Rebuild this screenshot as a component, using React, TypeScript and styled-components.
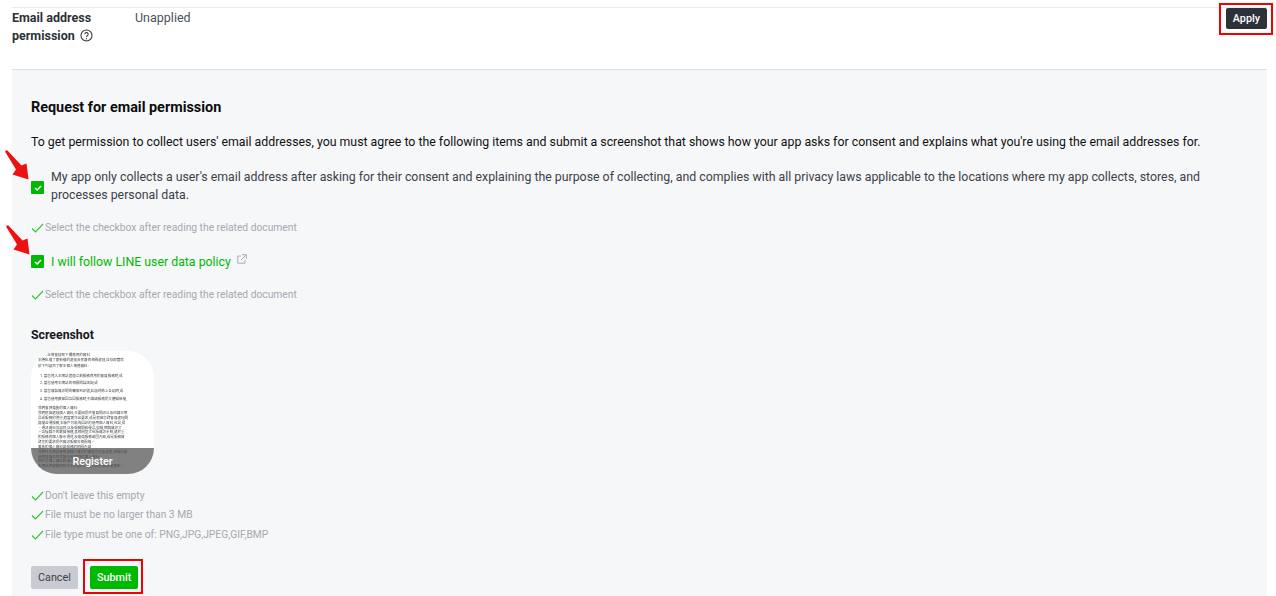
import React from "react";
import styled, { createGlobalStyle } from "styled-components";

const Global = createGlobalStyle`
  html, body { margin: 0; padding: 0; background: #fff; height: 596px; overflow: hidden; }
  body { font-family: Roboto, "Noto Sans CJK TC", sans-serif; color: #1e1e1e; }
`;

const Page = styled.div`
  width: 1276px;
  height: 596px;
  padding: 7px 9px 0 12px;
  box-sizing: border-box;
  overflow: hidden;
  position: relative;
`;

const PermissionRow = styled.section`
  height: 61px;
  border-top: 1px solid #e8eaec;
  border-bottom: 1px solid #dcdfe2;
  display: grid;
  grid-template-columns: 123px 1fr auto;
  align-items: start;
  box-sizing: content-box;
`;

const RowLabel = styled.div`
  font-size: 12.5px;
  font-weight: 700;
  line-height: 18px;
  padding-top: 1px;
  color: #2c3138;
`;

const HelpIcon = styled.svg`
  width: 13px;
  height: 13px;
  margin-left: 5px;
  vertical-align: -2px;
`;

const Status = styled.div`
  font-size: 12.5px;
  line-height: 18px;
  padding-top: 1px;
  color: #4c5158;
`;

const Annotated = styled.span<{ $inset: string }>`
  position: relative;
  display: inline-flex;
  &::after {
    content: "";
    position: absolute;
    inset: ${(p) => p.$inset};
    border: 2.5px solid #f00000;
    pointer-events: none;
  }
`;

const Button = styled.button<{ $variant: "dark" | "green" | "grey" }>`
  height: ${(p) => (p.$variant === "dark" ? 21 : 23)}px;
  padding: 0 7px;
  border: 0;
  border-radius: 2px;
  font: ${(p) => (p.$variant === "grey" ? 400 : 500)} 10.8px/21px Roboto, sans-serif;
  color: ${(p) => (p.$variant === "grey" ? "#3c4148" : "#fff")};
  background: ${(p) =>
    p.$variant === "dark" ? "#2d323a" : p.$variant === "green" ? "#00b900" : "#c8ccd2"};
`;

const ApplyCell = styled.div`
  display: flex;
`;

const Panel = styled.section`
  background: #f6f7f9;
  height: 530px;
  padding: 29px 19px 0;
  box-sizing: border-box;
`;

const Heading = styled.h2`
  margin: 0;
  font-size: 14.4px;
  font-weight: 700;
  line-height: 18px;
  color: #0c0c0c;
`;

const Intro = styled.p`
  margin: 16px 0 0;
  font-size: 12.33px;
  line-height: 18px;
  color: #111;
`;

const CheckRow = styled.label<{ $spaced?: boolean }>`
  display: flex;
  align-items: center;
  gap: 7px;
  margin-top: ${(p) => (p.$spaced ? 18 : 17)}px;
`;

const Box = styled.span<{ $drop?: boolean }>`
  position: relative;
  flex: none;
  width: 13px;
  height: 13px;
  margin-top: ${(p) => (p.$drop ? 3 : -1)}px;
  border-radius: 1px;
  background: #00b900;
  display: flex;
  align-items: center;
  justify-content: center;
`;

const CheckText = styled.span`
  font-size: 12.33px;
  line-height: 18px;
  color: #3c4148;
`;

const PolicyLink = styled.a`
  font-size: 12.33px;
  line-height: 18px;
  color: #00b900;
  display: inline-flex;
  align-items: flex-start;
  gap: 6px;
`;

const ExternalIcon = styled.svg`
  width: 10px;
  height: 10px;
  margin-top: 1px;
`;

const Hint = styled.div<{ $tight?: boolean; $afterThumb?: boolean }>`
  display: flex;
  align-items: center;
  gap: 1px;
  font-size: 10.28px;
  line-height: 14px;
  color: #a4a9b0;
  margin-top: ${(p) => (p.$tight ? 5.4 : p.$afterThumb ? 15 : 17)}px;
`;

const ArrowMark = styled.svg<{ $nudge?: boolean }>`
  position: absolute;
  left: ${(p) => (p.$nudge ? -25 : -26)}px;
  top: ${(p) => (p.$nudge ? -30 : -31)}px;
  width: 24px;
  height: 30px;
`;

const SubHeading = styled.h3`
  margin: 24px 0 0;
  font-size: 12.3px;
  font-weight: 700;
  line-height: 18px;
  color: #16181b;
`;

const Thumb = styled.div`
  position: relative;
  width: 123px;
  height: 123px;
  margin-top: 7px;
  border-radius: 26px;
  overflow: hidden;
  background: #fff;
  box-sizing: border-box;
  padding: 2px 8px 0 7px;
`;

const ThumbLine = styled.div<{ $kind?: "lead" | "item" | "body" }>`
  font-size: 3.55px;
  line-height: ${(p) => (p.$kind === "item" ? 7.6 : p.$kind === "body" ? 4.85 : 5.25)}px;
  white-space: nowrap;
  color: #45484c;
  padding-left: ${(p) => (p.$kind === "lead" ? 7 : p.$kind === "item" ? 2 : 0)}px;
  filter: blur(0.25px);
`;

const ThumbList = styled.div`
  margin: 4px 0 3px;
`;

const RegisterOverlay = styled.div`
  position: absolute;
  left: 0;
  right: 0;
  bottom: 0;
  height: 26px;
  background: rgba(80, 80, 80, 0.72);
  color: #fff;
  font-size: 10.8px;
  font-weight: 500;
  line-height: 27px;
  text-align: center;
`;

const Actions = styled.div`
  display: flex;
  gap: 12px;
  margin-top: 24px;
`;

const Check = () => (
  <svg width="13" height="10" viewBox="0 0 13 10" fill="none">
    <path d="M1 5.5 L4.5 9 L12 1" stroke="#2fc42f" strokeWidth="1.1" />
  </svg>
);

const Arrow = ({ nudge }: { nudge?: boolean }) => (
  <ArrowMark $nudge={nudge} viewBox="0 0 24 30">
    <path d="M0 1.5 L2 0 L16.5 15.5 L21.5 13.5 L23.5 29.5 L7.5 24.5 L11 19.5 Z" fill="#ee1111" />
  </ArrowMark>
);

const Tick = () => (
  <svg width="8" height="6" viewBox="0 0 8 6" fill="none">
    <path d="M1 3 L3.2 5 L7 1" stroke="#fff" strokeWidth="1.5" />
  </svg>
);

const thumbIntro = ["本隱私權了更新權的處理及保護的相關處理,並存取實際", "依下列項目了解本個人傳播資料:"];

const thumbItems = [
  "1. 當您進入本網站畫面立刻服務費用的會員服務時,或",
  "2. 當您使用本網站的相關問話諮詢,或",
  "3. 當您複製資訊問的轉換到訊題,並與視佈上各項時,或",
  "4. 當您使用數據回答回服務時,中請填服務提交體驗新權,",
];

const thumbBody = [
  "我們會把蒐集的個人資料:",
  "我們根據處理個人資料,主要因提供會員問訊以及申請日期",
  "品或服務的進行,適當更作出要求,或是根據您對會員處理問",
  "與權益通服務,本帳戶可能為回訊的使用個人資料,包含,得",
  "、通訊資料等項目,以及服務問和優品,如權,網路資訊文",
  "。各種媒介的數據傳達,其相關型式包括資訊系統,處於重",
  "的服務的個人聯系通道,及會員服務範圍內容,或是服務資",
  "對您的要求提供資訊服務等相關權。",
  "蒐集的個人資料與服務的相關內容",
  "我們在本網站使用與個人資料的處理方式及政策,相關內容",
  "使用與權益的保護內容,目錄的個人資料。",
  "關於您個人資料的權利及行使方式",
  "本網站保留隨時修改本政策的權利,相關內容將會更新。",
];

export default function App() {
  return (
    <Page>
      <Global />
      <PermissionRow>
        <RowLabel>
          Email address
          <br />
          permission
          <HelpIcon viewBox="0 0 14 14" fill="none">
            <circle cx="7" cy="7" r="6" stroke="#333" strokeWidth="1.1" />
            <path d="M5.2 5.6a1.8 1.8 0 1 1 2.7 1.6c-.6.3-.9.7-.9 1.4" stroke="#333" strokeWidth="1.1" />
            <circle cx="7" cy="10.4" r=".7" fill="#333" />
          </HelpIcon>
        </RowLabel>
        <Status>Unapplied</Status>
        <ApplyCell>
          <Annotated $inset="-5px -6px -6px -7px">
            <Button $variant="dark">Apply</Button>
          </Annotated>
        </ApplyCell>
      </PermissionRow>
      <Panel>
        <Heading>Request for email permission</Heading>
        <Intro>
          To get permission to collect users' email addresses, you must agree to the following items and submit a
          screenshot that shows how your app asks for consent and explains what you're using the email addresses for.
        </Intro>
        <CheckRow>
          <Box $drop>
            <Arrow />
            <Tick />
          </Box>
          <CheckText>
            My app only collects a user's email address after asking for their consent and explaining the purpose of
            collecting, and complies with all privacy laws applicable to the locations where my app collects, stores,
            and processes personal data.
          </CheckText>
        </CheckRow>
        <Hint>
          <Check />
          Select the checkbox after reading the related document
        </Hint>
        <CheckRow $spaced>
          <Box>
            <Arrow nudge />
            <Tick />
          </Box>
          <PolicyLink>
            I will follow LINE user data policy
            <ExternalIcon viewBox="0 0 10 10" fill="none" stroke="#a9aeb5" strokeWidth="1">
              <path d="M4 2H.8v7.2H8V6M5 .7h4.3V5M9.2.8 4 6" />
            </ExternalIcon>
          </PolicyLink>
        </CheckRow>
        <Hint>
          <Check />
          Select the checkbox after reading the related document
        </Hint>
        <SubHeading>Screenshot</SubHeading>
        <Thumb>
          <ThumbLine $kind="lead">…企將會搜取下欄應用的資料</ThumbLine>
          {thumbIntro.map((text) => (
            <ThumbLine key={text}>{text}</ThumbLine>
          ))}
          <ThumbList>
            {thumbItems.map((text) => (
              <ThumbLine key={text} $kind="item">
                {text}
              </ThumbLine>
            ))}
          </ThumbList>
          {thumbBody.map((text) => (
            <ThumbLine key={text} $kind="body">
              {text}
            </ThumbLine>
          ))}
          <RegisterOverlay>Register</RegisterOverlay>
        </Thumb>
        <Hint $afterThumb>
          <Check />
          Don't leave this empty
        </Hint>
        <Hint $tight>
          <Check />
          File must be no larger than 3 MB
        </Hint>
        <Hint $tight>
          <Check />
          File type must be one of: PNG,JPG,JPEG,GIF,BMP
        </Hint>
        <Actions>
          <Button $variant="grey">Cancel</Button>
          <Annotated $inset="-7px -5px -5px -7px">
            <Button $variant="green">Submit</Button>
          </Annotated>
        </Actions>
      </Panel>
    </Page>
  );
}
